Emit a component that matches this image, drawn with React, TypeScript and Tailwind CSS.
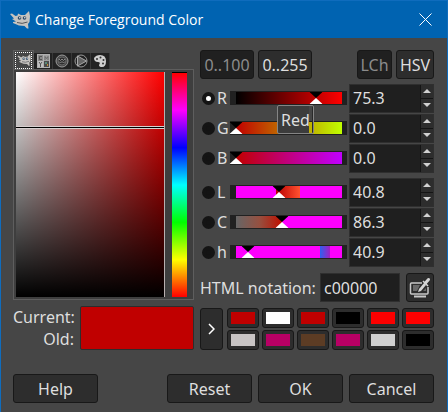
import { useState } from 'react';

const button =
  'flex items-center justify-center h-[29px] rounded-[3px] border border-[#181818] bg-[#2d2d2d] text-[#dedede]';

function Wilber({ className }: { className: string }) {
  return (
    <svg viewBox="0 0 20 18" className={className} aria-hidden="true">
      <path
        d="M0 3 L2 2.500 L5.500 5 L7.500 4.500 L8 2.500 L11 4 L15 4 L19 0 L20 5 L19.500 11 L18 13 L18.500 17.500 L17 17.500 L14.500 15 L9 14.500 L3 12 L3 11 L6 10.500 L2 8 L4 7.500 Z"
        fill="#c6c3bf"
      />
      <circle cx="9.500" cy="7" r="1.800" fill="#2f4a66" />
      <circle cx="14.500" cy="7" r="1.800" fill="#2f4a66" />
      <circle cx="9.800" cy="6.800" r="0.800" fill="#e8e8e8" />
      <circle cx="14.800" cy="6.800" r="0.800" fill="#e8e8e8" />
      <path d="M7 11.500 Q12 13.500 17.500 11" stroke="#55565a" strokeWidth="1" fill="none" />
    </svg>
  );
}

function CmykIcon() {
  return (
    <svg viewBox="0 0 13 14" className="h-[14px] w-[13px]" aria-hidden="true">
      <rect width="13" height="14" fill="#b0b0b0" />
      <rect x="1" y="1" width="5" height="6" fill="#8a8a8a" />
      <rect x="7" y="1" width="5" height="6" fill="#a0a0a0" />
      <rect x="1" y="7" width="5" height="6" fill="#c0c0c0" />
      <rect x="7" y="7" width="5" height="6" fill="#4c4c4c" />
      <path d="M5 2.500H2.500V5.500H5" stroke="#555" fill="none" />
      <path d="M8 6V2.500L9.500 4.500L11 2.500V6" stroke="#666" fill="none" />
      <path d="M2 8L3.500 10L5 8 M3.500 10V13" stroke="#555" fill="none" />
      <path d="M8 8h2v2h-2z" fill="#5a8a78" />
      <path d="M10 10h1v2h-1z" fill="#c09030" />
    </svg>
  );
}

function WatercolorIcon() {
  return (
    <svg viewBox="0 0 14 14" className="h-[14px] w-[14px]" aria-hidden="true">
      <circle cx="7" cy="7" r="6" fill="#4a4a4a" stroke="#9a9a9a" />
      <circle cx="7" cy="7" r="4" fill="#2e2e2e" stroke="#666" />
      <path d="M4 5l1.500 1.500 1.500-1.500 1.500 1.500 1.500-1.500 M4 7.500l1.500 1.500 1.500-1.500 1.500 1.500 1.500-1.500" stroke="#8a8a8a" fill="none" />
    </svg>
  );
}

function WheelIcon() {
  return (
    <svg viewBox="0 0 14 14" className="h-[14px] w-[14px]" aria-hidden="true">
      <circle cx="7" cy="7" r="6" fill="none" stroke="#999" />
      <path d="M3.500 2 L12.500 7 L3.500 12 Z" fill="#666" stroke="#a8a8a8" />
    </svg>
  );
}

function PaletteIcon() {
  return (
    <svg viewBox="0 0 14 14" className="h-[14px] w-[14px]" aria-hidden="true">
      <path
        d="M1 4 Q3 1 7 1 Q13 1 13 7 Q13 13 9 13 Q6 13 6 11 Q8 8 5 8 Q1 8 1 4 Z"
        fill="#cfcfcf"
      />
      <circle cx="4" cy="5" r="1" fill="#333" />
      <circle cx="7.500" cy="3.500" r="1" fill="#333" />
      <circle cx="10.500" cy="6" r="1" fill="#333" />
      <circle cx="10" cy="9.500" r="1" fill="#333" />
    </svg>
  );
}

function PickerIcon() {
  return (
    <svg viewBox="0 0 22 22" className="h-[22px] w-[22px]" aria-hidden="true">
      <path d="M13 6H2.500Q1.500 6 1.500 7V16Q1.500 17 2.500 17H18Q19 17 19 16V10" fill="none" stroke="#c9c9c9" strokeWidth="1.500" />
      <path d="M4 8H11L8 14H4Z M14 14L17 11V14Z" fill="#6a6a6a" />
      <path d="M5 19.500H17" stroke="#c9c9c9" strokeWidth="2" />
      <path d="M9 15L10 12L15 6L17 8L12 14Z" fill="#d5d5d5" />
      <path d="M14 4L19 9" stroke="#d5d5d5" strokeWidth="1.500" />
      <path d="M16.500 6L19.500 2.500" stroke="#d5d5d5" strokeWidth="3" strokeLinecap="round" />
    </svg>
  );
}

type Channel = { id: string; name: string; max: number; start: number; track: string };

const rgb: Channel[] = [
  { id: 'R', name: 'Red', max: 100, start: 75.3, track: 'bg-[linear-gradient(to_right,#000,#f00)]' },
  { id: 'G', name: 'Green', max: 100, start: 0, track: 'bg-[linear-gradient(to_right,#c00000,#c0ff00)]' },
  { id: 'B', name: 'Blue', max: 100, start: 0, track: 'bg-[linear-gradient(to_right,#c00000,#c000ff)]' },
];

const lch: Channel[] = [
  {
    id: 'L',
    name: 'Lightness',
    max: 100,
    start: 40.8,
    track: 'bg-[linear-gradient(to_right,#f0f_38%,#b80000_38%,#ff5030_60%,#f0f_60%)]',
  },
  {
    id: 'C',
    name: 'Chroma',
    max: 200,
    start: 86.3,
    track: 'bg-[linear-gradient(to_right,#666,#965040_22%,#c01000_43%,#f0f_43%)]',
  },
  {
    id: 'h',
    name: 'Hue',
    max: 360,
    start: 40.9,
    track: 'bg-[linear-gradient(to_right,#f0f_79%,#2b62f0_79%,#a81cc0_89%,#f0f_89%)]',
  },
];

function ChannelRow({ channel, tooltip }: { channel: Channel; tooltip?: boolean }) {
  const [value, setValue] = useState(channel.start);
  const step = (d: number) => setValue(Math.min(channel.max, Math.max(0, value + d)));
  return (
    <div className="flex h-[30px] items-center">
      <label className="flex w-[30px] items-center gap-[2px] pl-[2px]">
        <input
          type="radio"
          name="channel"
          defaultChecked={channel.id === 'R'}
          className="size-[13px] shrink-0 appearance-none rounded-full border-4 border-[#141414] bg-[#141414] checked:bg-white"
        />
        {channel.id}
      </label>
      <div className="relative h-[14px] min-w-0 flex-1 bg-[#212121] py-px pr-[5px] pl-[6px]">
        <div className={`relative h-[12px] ${channel.track}`}>
          <svg
            viewBox="0 0 13 12"
            className="absolute top-0 h-[12px] w-[13px] -translate-x-1/2"
            style={{ left: `${(value / channel.max) * 100}%` }}
            aria-hidden="true"
          >
            <path d="M0 0H13L6.500 6Z" fill="#000" />
            <path d="M0 12H13L6.500 6Z" fill="#fff" />
          </svg>
        </div>
        <input
          type="range"
          aria-label={channel.name}
          min={0}
          max={channel.max}
          step={0.1}
          value={value}
          onChange={(e) => setValue(Number(e.target.value))}
          className="absolute inset-0 m-0 h-full w-full opacity-0"
        />
        {tooltip && (
          <div
            role="tooltip"
            className="absolute top-[14px] left-[47px] z-10 flex h-[29px] w-[37px] items-center rounded-[2px] border border-[#858585] bg-[linear-gradient(to_right,#3c3c3c_31px,transparent_31px,transparent_34px,#2a2a2a_34px)] pl-[3px]"
          >
            {channel.name}
          </div>
        )}
      </div>
      <div className="ml-[2px] flex h-[29px] w-[85px] border border-[#2f2f2f] bg-[#1f1f1f]">
        <input
          type="text"
          aria-label={`${channel.name} value`}
          value={value.toFixed(1)}
          onChange={(e) => setValue(Number(e.target.value) || 0)}
          className="min-w-0 flex-1 bg-transparent pl-[3px] outline-none"
        />
        <div className="flex w-[13px] flex-col gap-px bg-[#141414] pl-px">
          <button type="button" aria-label={`Increase ${channel.name}`} onClick={() => step(1)} className="flex flex-1 items-center justify-center bg-[#2d2d2d]">
            <svg viewBox="0 0 8 4" className="h-[4px] w-[8px]" aria-hidden="true">
              <path d="M0 4L4 0L8 4Z" fill="#d0d0d0" />
            </svg>
          </button>
          <button type="button" aria-label={`Decrease ${channel.name}`} onClick={() => step(-1)} className="flex flex-1 items-center justify-center bg-[#2d2d2d]">
            <svg viewBox="0 0 8 4" className="h-[4px] w-[8px]" aria-hidden="true">
              <path d="M0 0L4 4L8 0Z" fill="#d0d0d0" />
            </svg>
          </button>
        </div>
      </div>
    </div>
  );
}

const history = [
  'bg-[#c00000]', 'bg-white', 'bg-[#c00000]', 'bg-black', 'bg-[#fc0000]', 'bg-[#ff0000]',
  'bg-[#c8c4c4]', 'bg-[#b80064]', 'bg-[#5c3c24]', 'bg-[#b80064]', 'bg-[#d0d0d0]', 'bg-black',
];

const tabs = [
  { name: 'CMYK', icon: <CmykIcon /> },
  { name: 'Watercolor', icon: <WatercolorIcon /> },
  { name: 'Wheel', icon: <WheelIcon /> },
  { name: 'Palette', icon: <PaletteIcon /> },
];

export default function App() {
  return (
    <div className="min-h-screen border-x border-t border-[#0f6cbd] bg-[#464646] font-['Noto_Sans',sans-serif] text-[16px] leading-[22px] text-[#dedede]">
      <header className="flex h-[37px] items-center bg-[#0063b1] pr-[15px] pl-[9px] text-white">
        <Wilber className="h-[18px] w-[20px]" />
        <h1 className="ml-[5px] flex-1 font-['Open_Sans',sans-serif] text-[14px]">Change Foreground Color</h1>
        <button type="button" aria-label="Close">
          <svg viewBox="0 0 13 13" className="size-[13px]" aria-hidden="true">
            <path d="M0.500 0.500L12.500 12.500M12.500 0.500L0.500 12.500" stroke="#fff" />
          </svg>
        </button>
      </header>
      <main className="pt-[12px] pr-[13px] pl-[12px]">
        <div className="flex gap-[6px]">
          <section className="w-[181px] shrink-0">
            <div role="tablist" className="flex h-[19px] items-end">
              <button type="button" role="tab" aria-selected="true" aria-label="GIMP" className="flex h-[19px] w-[21px] items-center justify-center border border-b-0 border-[#5c5c5c] bg-[#464646] p-px">
                <span className="flex h-[17px] w-[17px] items-center justify-center border border-dotted border-white">
                  <Wilber className="h-[12px] w-[14px]" />
                </span>
              </button>
              {tabs.map((t) => (
                <button key={t.name} type="button" role="tab" aria-selected="false" aria-label={t.name} className="flex h-[16px] w-[19px] items-center justify-center border-r border-[#383838] bg-[#222]">
                  {t.icon}
                </button>
              ))}
            </div>
            <div className="flex h-[231px] border border-[#5e5e5e] bg-[#3e3e3e] p-[2px]">
              <div className="flex flex-1 flex-col border-r border-[#b8b0b0] bg-[linear-gradient(to_top,#000,transparent),linear-gradient(to_right,#fff,#f00)]">
                <div className="mt-[54px] h-[3px] border-y border-[#d8d0d0] bg-black" />
              </div>
              <div className="mr-[4px] ml-[7px] w-[15px] border-t border-black bg-[linear-gradient(to_bottom,#f00,#f0f,#00f,#0ff,#0f0,#ff0,#f00)]" />
            </div>
            <div className="mt-[6px] flex items-center justify-between">
              <div className="w-[61px] text-right">
                <p>Current:</p>
                <p>Old:</p>
              </div>
              <div className="h-[44px] w-[114px] rounded-[2px] border border-[#2d2d2d] bg-[#c00000]" />
            </div>
          </section>
          <section className="min-w-0 flex-1">
            <div className="flex gap-[4px]">
              <button type="button" className={`${button} w-[54px] bg-[#202020]! text-[#8c8c8c]!`}>0..100</button>
              <button type="button" className={`${button} w-[54px]`}>0..255</button>
              <button type="button" className={`${button} ml-auto w-[35px] bg-[#202020]! text-[#8c8c8c]!`}>LCh</button>
              <button type="button" className={`${button} w-[38px]`}>HSV</button>
            </div>
            <div className="mt-[4px]">
              {rgb.map((c) => (
                <ChannelRow key={c.id} channel={c} tooltip={c.id === 'R'} />
              ))}
            </div>
            <div className="mt-[4px]">
              {lch.map((c) => (
                <ChannelRow key={c.id} channel={c} />
              ))}
            </div>
            <div className="mt-[6px] flex items-center">
              <label htmlFor="html" className="flex-1 whitespace-nowrap">HTML notation:</label>
              <input id="html" type="text" defaultValue="c00000" className="h-[29px] w-[80px] border border-[#2f2f2f] bg-[#1f1f1f] pl-[3px] outline-none" />
              <button type="button" aria-label="Pick color from screen" className={`${button} ml-[6px] w-[28px]`}>
                <PickerIcon />
              </button>
            </div>
            <div className="mt-[6px] flex gap-[4px]">
              <button type="button" aria-label="Add to history" className="flex w-[23px] items-center justify-center rounded-[3px] border border-[#181818] bg-[#2d2d2d]">
                <svg viewBox="0 0 7 12" className="h-[12px] w-[7px]" aria-hidden="true">
                  <path d="M1 1L6 6L1 11" fill="none" stroke="#fff" strokeWidth="1.500" />
                </svg>
              </button>
              <div className="grid flex-1 grid-cols-6 gap-x-[3px] gap-y-[2px]">
                {history.map((c, i) => (
                  <button key={i} type="button" aria-label={`History color ${i + 1}`} className="h-[20px] rounded-[3px] border border-[#181818] bg-[#2d2d2d] px-[3px] py-[3px]">
                    <span className={`block h-full ${c}`} />
                  </button>
                ))}
              </div>
            </div>
          </section>
        </div>
        <footer className="mt-[24px] flex gap-[6px]">
          <button type="button" className={`${button} mr-auto w-[85px]`}>Help</button>
          <button type="button" className={`${button} w-[85px]`}>Reset</button>
          <button type="button" className={`${button} w-[85px]`}>OK</button>
          <button type="button" className={`${button} w-[85px]`}>Cancel</button>
        </footer>
      </main>
    </div>
  );
}
